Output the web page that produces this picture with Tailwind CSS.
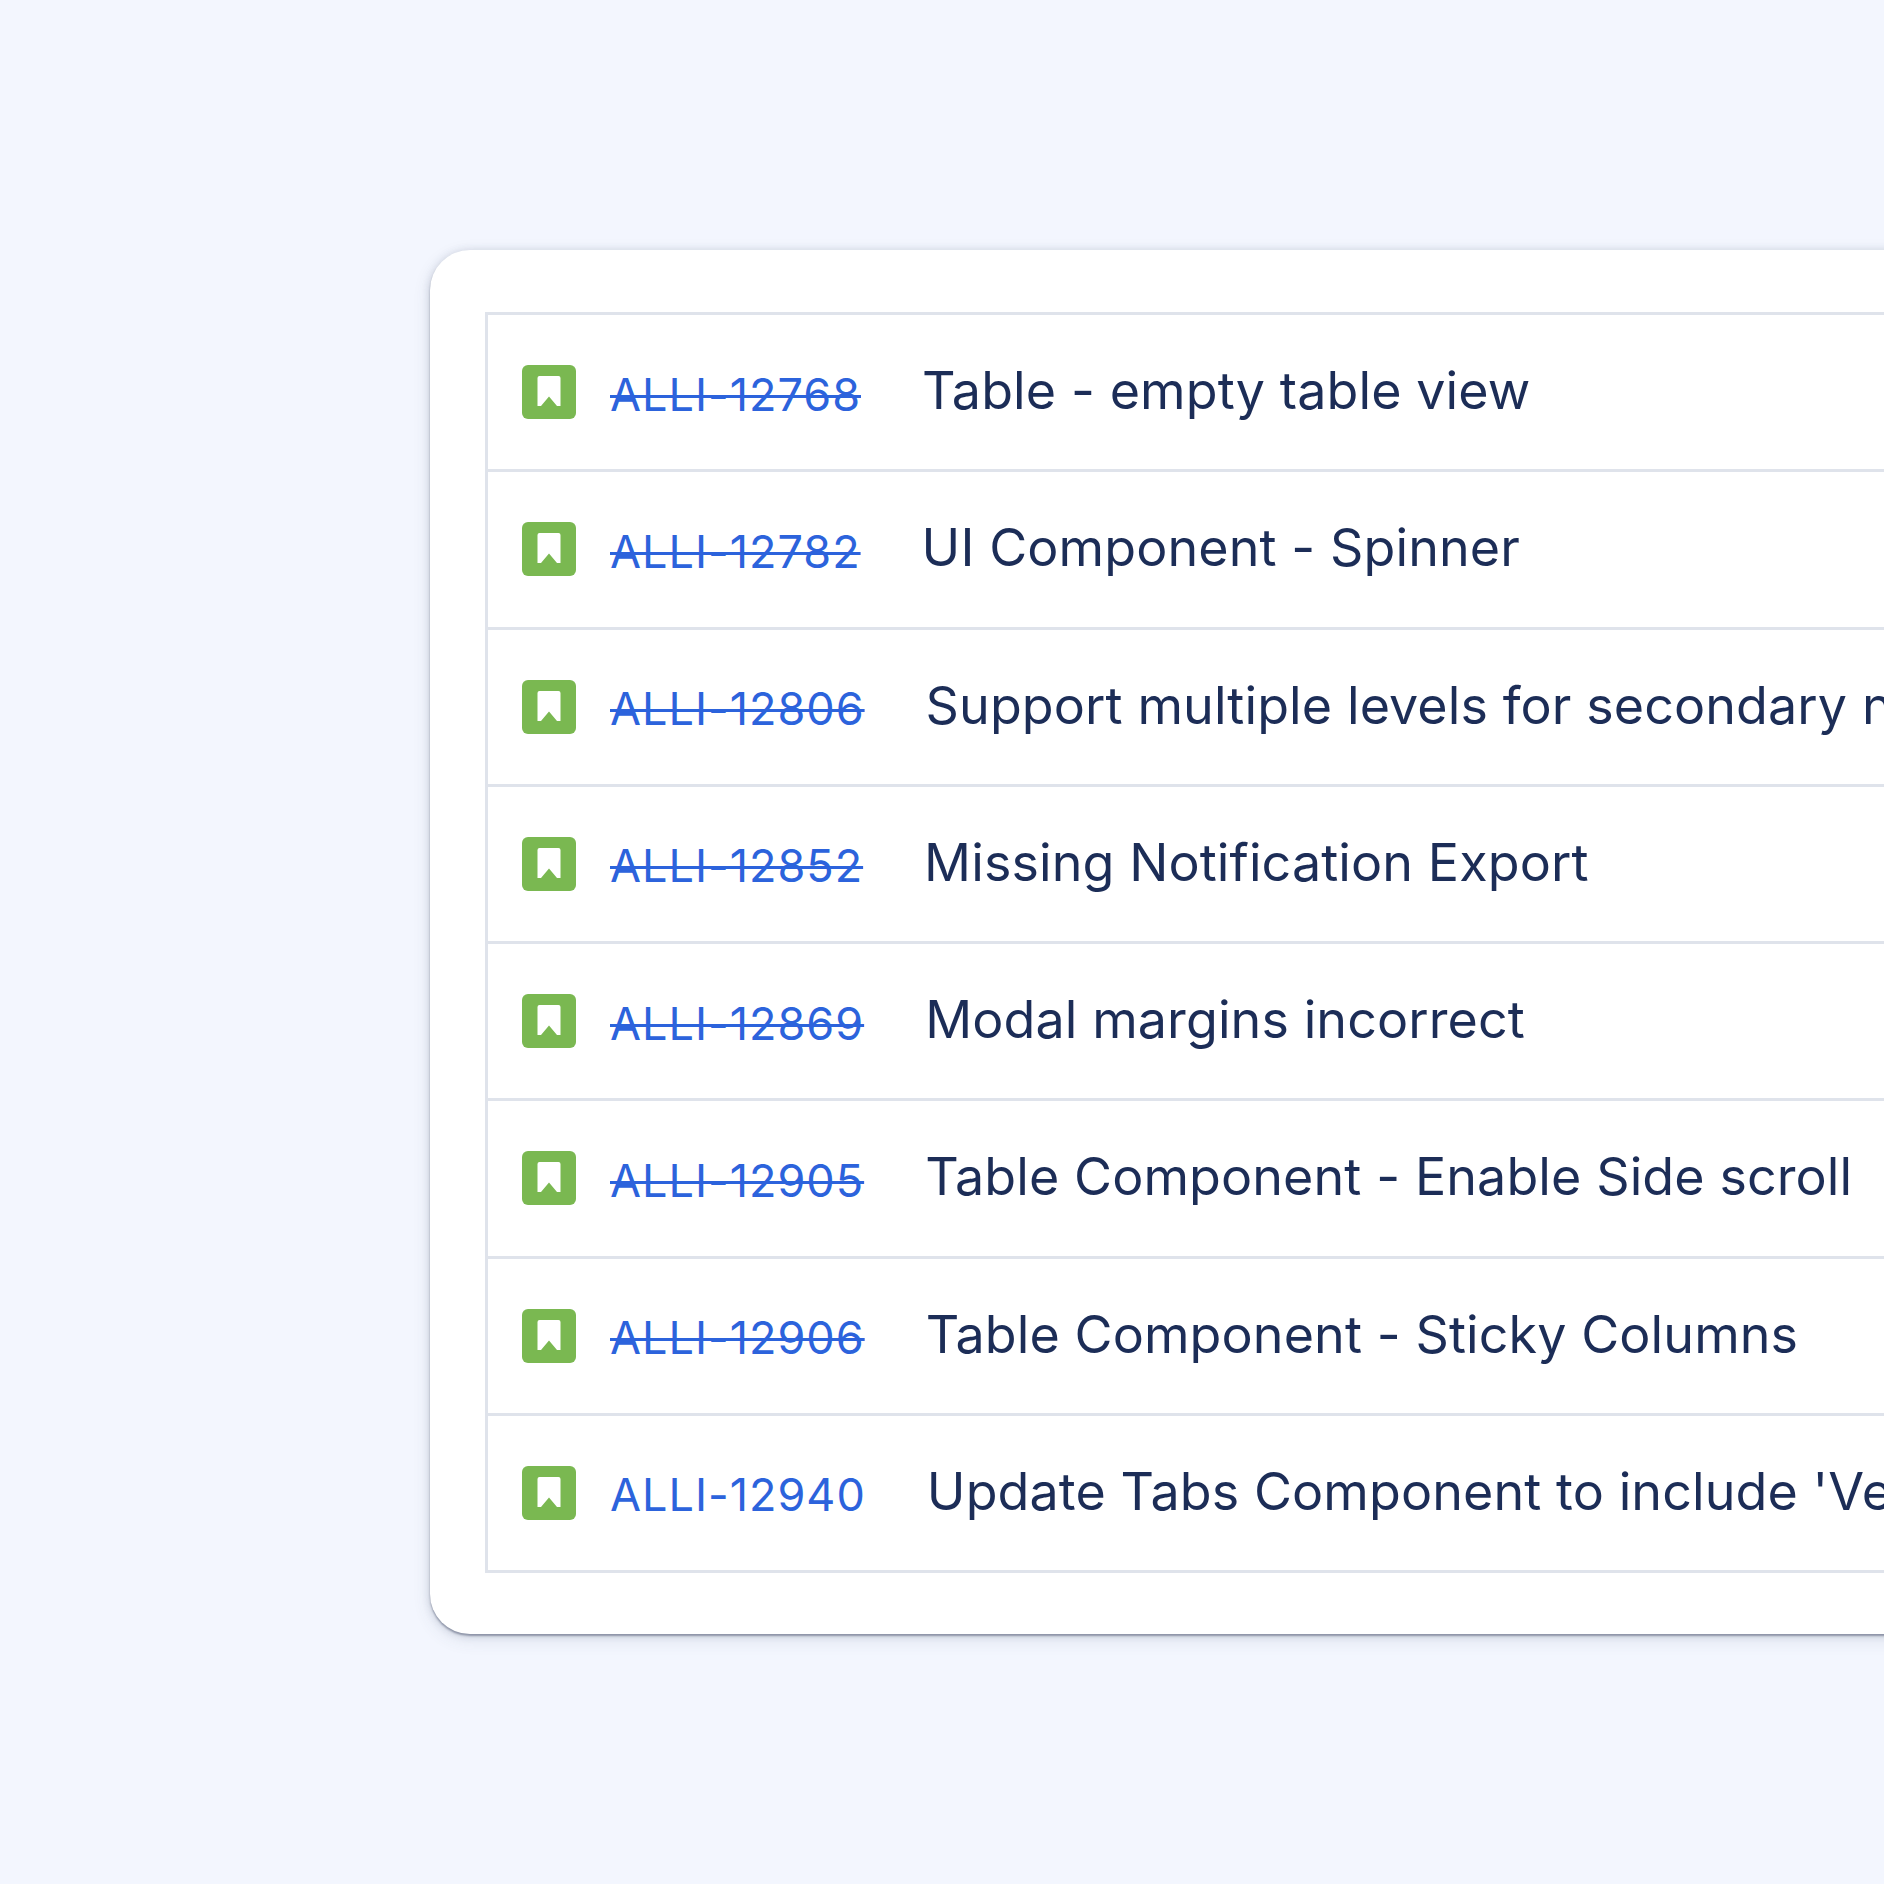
<!DOCTYPE html>
<html><head><meta charset="utf-8"><script src="https://cdn.jsdelivr.net/npm/@tailwindcss/browser@4"></script></head>
<body class="m-0">
<div class="w-[1884px] h-[1884px] bg-[#f3f6fe] overflow-hidden pl-[430px] pt-[250px] font-['Inter',sans-serif]">
<div class="w-[1800px] h-[1384px] bg-white rounded-[40px] pl-[55px] pt-[62px] shadow-[0_2px_2px_rgba(40,50,80,0.4),0_1px_8px_rgba(50,60,90,0.18),0_5px_18px_rgba(60,70,100,0.12)]">
<div class="w-[1745px] border-l-[3px] border-t-[3px] border-[#dfe3eb] flex flex-col">
<div class="h-[157.25px] border-b-[3px] border-[#dfe3eb] pl-[34px] flex items-center"><svg class="w-[54px] h-[54px] shrink-0" viewBox="0 0 54 54"><rect width="54" height="54" rx="6" fill="#7ab851"/><path d="M15.5 13a2 2 0 0 1 2-2h19a2 2 0 0 1 2 2v28h-3.5l-8-9.500-8 9.500h-3.500z" fill="#fff"/></svg><a class="ml-[34px] text-[#2c63dc] text-[45px] tracking-[1px] line-through decoration-[3px] leading-none translate-y-[2px]">ALLI-12768</a><span class="ml-[61px] text-[#1c2d57] text-[52px] tracking-[0.1px] leading-none -translate-y-[1px]">Table - empty table view</span></div>
<div class="h-[157.25px] border-b-[3px] border-[#dfe3eb] pl-[34px] flex items-center"><svg class="w-[54px] h-[54px] shrink-0" viewBox="0 0 54 54"><rect width="54" height="54" rx="6" fill="#7ab851"/><path d="M15.5 13a2 2 0 0 1 2-2h19a2 2 0 0 1 2 2v28h-3.5l-8-9.500-8 9.500h-3.500z" fill="#fff"/></svg><a class="ml-[34px] text-[#2c63dc] text-[45px] tracking-[1px] line-through decoration-[3px] leading-none translate-y-[2px]">ALLI-12782</a><span class="ml-[61px] text-[#1c2d57] text-[52px] tracking-[0.1px] leading-none -translate-y-[1px]">UI Component - Spinner</span></div>
<div class="h-[157.25px] border-b-[3px] border-[#dfe3eb] pl-[34px] flex items-center"><svg class="w-[54px] h-[54px] shrink-0" viewBox="0 0 54 54"><rect width="54" height="54" rx="6" fill="#7ab851"/><path d="M15.5 13a2 2 0 0 1 2-2h19a2 2 0 0 1 2 2v28h-3.5l-8-9.500-8 9.500h-3.500z" fill="#fff"/></svg><a class="ml-[34px] text-[#2c63dc] text-[45px] tracking-[1px] line-through decoration-[3px] leading-none translate-y-[2px]">ALLI-12806</a><span class="ml-[61px] text-[#1c2d57] text-[52px] tracking-[0.1px] leading-none -translate-y-[1px] whitespace-nowrap">Support multiple levels for secondary nav</span></div>
<div class="h-[157.25px] border-b-[3px] border-[#dfe3eb] pl-[34px] flex items-center"><svg class="w-[54px] h-[54px] shrink-0" viewBox="0 0 54 54"><rect width="54" height="54" rx="6" fill="#7ab851"/><path d="M15.5 13a2 2 0 0 1 2-2h19a2 2 0 0 1 2 2v28h-3.5l-8-9.500-8 9.500h-3.500z" fill="#fff"/></svg><a class="ml-[34px] text-[#2c63dc] text-[45px] tracking-[1px] line-through decoration-[3px] leading-none translate-y-[2px]">ALLI-12852</a><span class="ml-[61px] text-[#1c2d57] text-[52px] tracking-[0.1px] leading-none -translate-y-[1px]">Missing Notification Export</span></div>
<div class="h-[157.25px] border-b-[3px] border-[#dfe3eb] pl-[34px] flex items-center"><svg class="w-[54px] h-[54px] shrink-0" viewBox="0 0 54 54"><rect width="54" height="54" rx="6" fill="#7ab851"/><path d="M15.5 13a2 2 0 0 1 2-2h19a2 2 0 0 1 2 2v28h-3.5l-8-9.500-8 9.500h-3.500z" fill="#fff"/></svg><a class="ml-[34px] text-[#2c63dc] text-[45px] tracking-[1px] line-through decoration-[3px] leading-none translate-y-[2px]">ALLI-12869</a><span class="ml-[61px] text-[#1c2d57] text-[52px] tracking-[0.1px] leading-none -translate-y-[1px]">Modal margins incorrect</span></div>
<div class="h-[157.25px] border-b-[3px] border-[#dfe3eb] pl-[34px] flex items-center"><svg class="w-[54px] h-[54px] shrink-0" viewBox="0 0 54 54"><rect width="54" height="54" rx="6" fill="#7ab851"/><path d="M15.5 13a2 2 0 0 1 2-2h19a2 2 0 0 1 2 2v28h-3.5l-8-9.500-8 9.500h-3.500z" fill="#fff"/></svg><a class="ml-[34px] text-[#2c63dc] text-[45px] tracking-[1px] line-through decoration-[3px] leading-none translate-y-[2px]">ALLI-12905</a><span class="ml-[61px] text-[#1c2d57] text-[52px] tracking-[0.1px] leading-none -translate-y-[1px]">Table Component - Enable Side scroll</span></div>
<div class="h-[157.25px] border-b-[3px] border-[#dfe3eb] pl-[34px] flex items-center"><svg class="w-[54px] h-[54px] shrink-0" viewBox="0 0 54 54"><rect width="54" height="54" rx="6" fill="#7ab851"/><path d="M15.5 13a2 2 0 0 1 2-2h19a2 2 0 0 1 2 2v28h-3.5l-8-9.500-8 9.500h-3.500z" fill="#fff"/></svg><a class="ml-[34px] text-[#2c63dc] text-[45px] tracking-[1px] line-through decoration-[3px] leading-none translate-y-[2px]">ALLI-12906</a><span class="ml-[61px] text-[#1c2d57] text-[52px] tracking-[0.1px] leading-none -translate-y-[1px]">Table Component - Sticky Columns</span></div>
<div class="h-[157.25px] border-b-[3px] border-[#dfe3eb] pl-[34px] flex items-center"><svg class="w-[54px] h-[54px] shrink-0" viewBox="0 0 54 54"><rect width="54" height="54" rx="6" fill="#7ab851"/><path d="M15.5 13a2 2 0 0 1 2-2h19a2 2 0 0 1 2 2v28h-3.5l-8-9.500-8 9.500h-3.500z" fill="#fff"/></svg><a class="ml-[34px] text-[#2c63dc] text-[45px] tracking-[1px] leading-none translate-y-[2px]">ALLI-12940</a><span class="ml-[61px] text-[#1c2d57] text-[52px] tracking-[0.1px] leading-none -translate-y-[1px] whitespace-nowrap">Update Tabs Component to include 'Vertical'</span></div>
</div></div></div>
</body></html>
